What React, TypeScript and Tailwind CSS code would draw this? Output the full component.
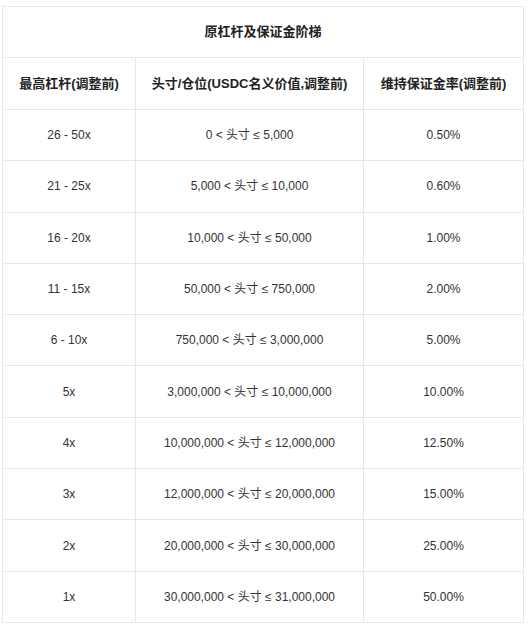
import React from "react";

const rows: [string, string, string][] = [
  ["26 - 50x", "0 < 头寸 ≤ 5,000", "0.50%"],
  ["21 - 25x", "5,000 < 头寸 ≤ 10,000", "0.60%"],
  ["16 - 20x", "10,000 < 头寸 ≤ 50,000", "1.00%"],
  ["11 - 15x", "50,000 < 头寸 ≤ 750,000", "2.00%"],
  ["6 - 10x", "750,000 < 头寸 ≤ 3,000,000", "5.00%"],
  ["5x", "3,000,000 < 头寸 ≤ 10,000,000", "10.00%"],
  ["4x", "10,000,000 < 头寸 ≤ 12,000,000", "12.50%"],
  ["3x", "12,000,000 < 头寸 ≤ 20,000,000", "15.00%"],
  ["2x", "20,000,000 < 头寸 ≤ 30,000,000", "25.00%"],
  ["1x", "30,000,000 < 头寸 ≤ 31,000,000", "50.00%"],
];

export default function App() {
  return (
    <div
      className="bg-white w-[529px] h-[627px] pt-[6px] pl-[2px]"
      style={{ fontFamily: '"Liberation Sans", "Noto Sans CJK SC", sans-serif' }}
    >
      <table className="border-collapse w-[521px] table-fixed text-[#333333]">
        <colgroup>
          <col className="w-[133px]" />
          <col className="w-[228px]" />
          <col className="w-[160px]" />
        </colgroup>
        <tbody>
          <tr className="h-[51px]">
            <td colSpan={3} className="border border-[#e8e8ec] text-center text-[13px] font-bold text-[#222]">
              原杠杆及保证金阶梯
            </td>
          </tr>
          <tr className="h-[52px]">
            <td className="border border-[#e8e8ec] text-center text-[13px] font-bold text-[#222]">最高杠杆(调整前)</td>
            <td className="border border-[#e8e8ec] text-center text-[13px] font-bold text-[#222]">头寸/仓位(USDC名义价值,调整前)</td>
            <td className="border border-[#e8e8ec] text-center text-[13px] font-bold text-[#222]">维持保证金率(调整前)</td>
          </tr>
          {rows.map((r, i) => (
            <tr key={i} className="h-[51.3px]">
              <td className="border border-[#e8e8ec] text-center text-[12px]">{r[0]}</td>
              <td className="border border-[#e8e8ec] text-center text-[12px]">{r[1]}</td>
              <td className="border border-[#e8e8ec] text-center text-[12px]">{r[2]}</td>
            </tr>
          ))}
        </tbody>
      </table>
    </div>
  );
}
